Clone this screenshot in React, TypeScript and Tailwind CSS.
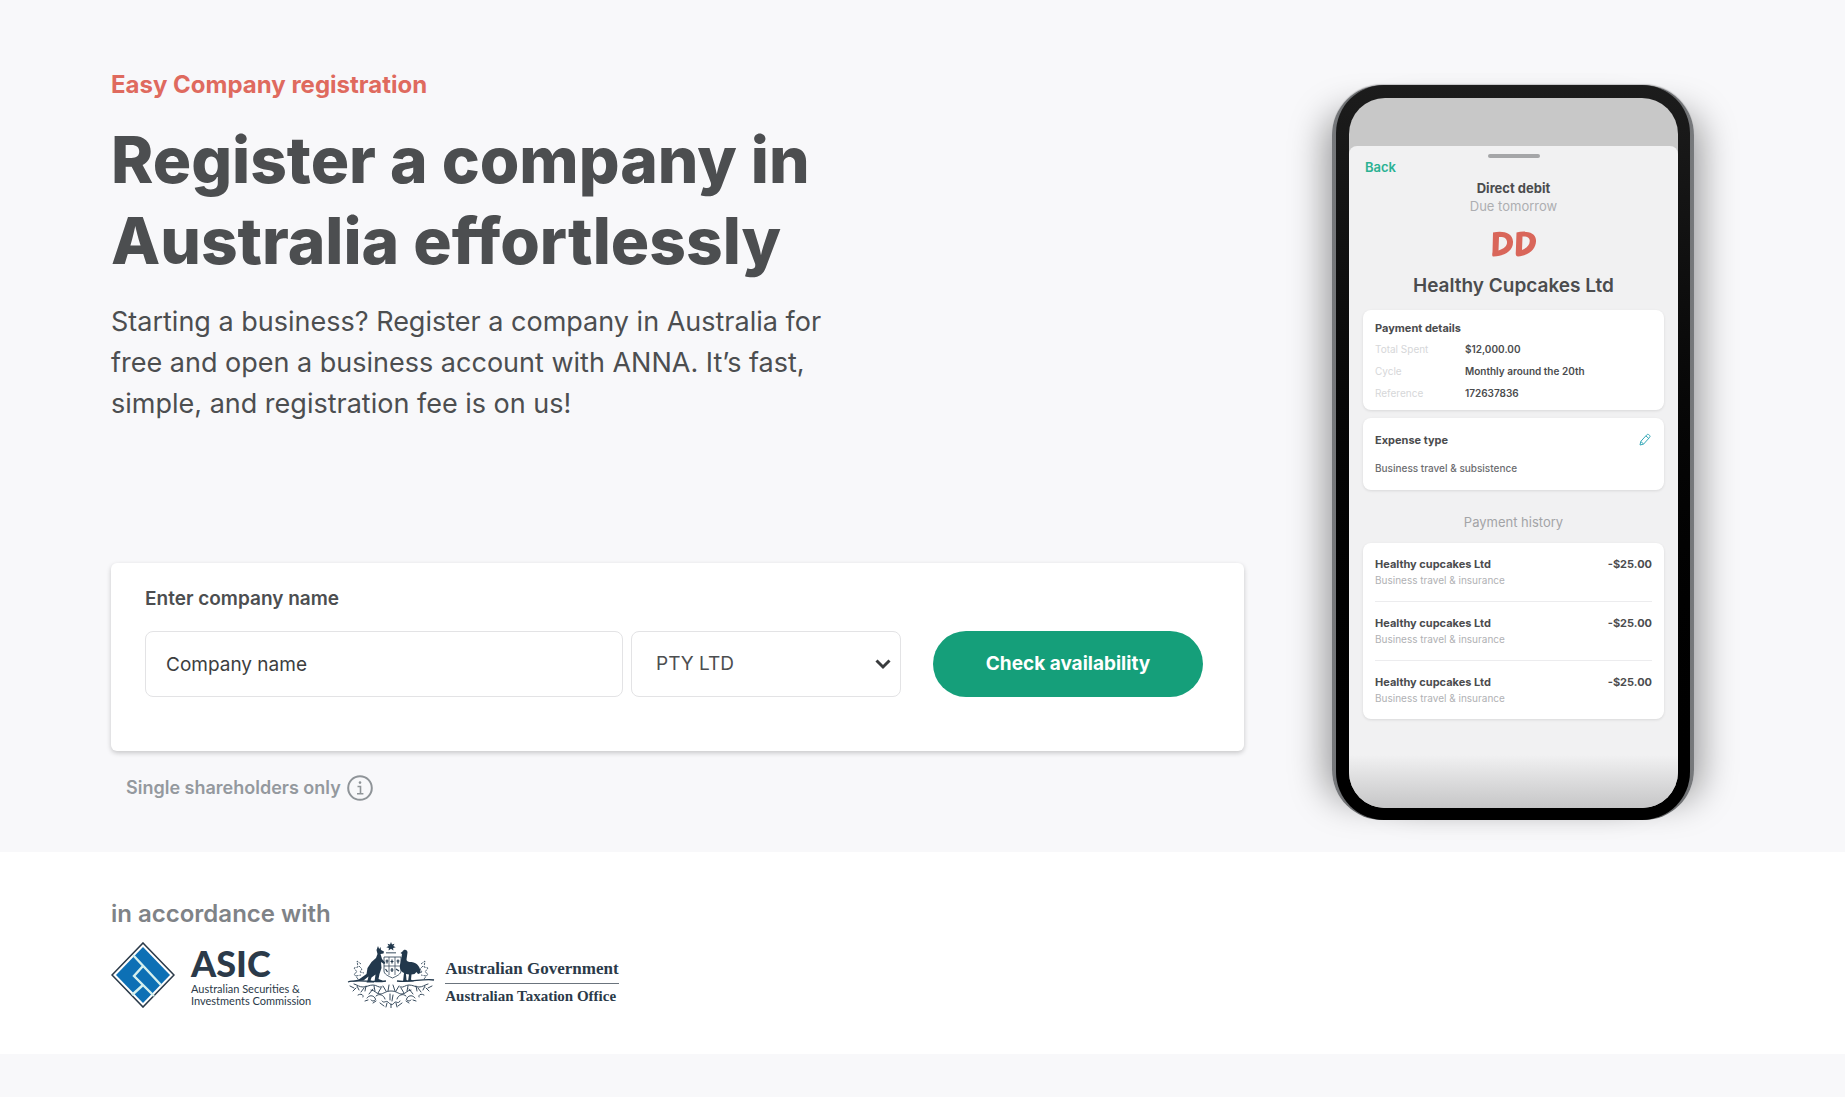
import { useState } from 'react'
import type { ReactNode } from 'react'

const details = [
  { label: 'Total Spent', value: '$12,000.00' },
  { label: 'Cycle', value: 'Monthly around the 20th' },
  { label: 'Reference', value: '172637836' },
]

const payments = [
  { id: 1, name: 'Healthy cupcakes Ltd', category: 'Business travel & insurance', amount: '-$25.00' },
  { id: 2, name: 'Healthy cupcakes Ltd', category: 'Business travel & insurance', amount: '-$25.00' },
  { id: 3, name: 'Healthy cupcakes Ltd', category: 'Business travel & insurance', amount: '-$25.00' },
]

function InfoIcon() {
  return (
    <svg width="26" height="26" viewBox="0 0 26 26" fill="none" stroke="#8f9498" strokeWidth="2">
      <circle cx="13" cy="13" r="11.8" />
      <path d="M10.5 11.5h3v7M10 18.8h6.4" strokeWidth="1.6" />
      <circle cx="13" cy="7.6" r="1.3" fill="#8f9498" stroke="none" />
    </svg>
  )
}

function PencilIcon() {
  return (
    <svg width="14" height="14" viewBox="0 0 14 14" fill="none" stroke="#35a9b8" strokeLinejoin="round">
      <path d="M2 12l.8-3.6 6-6.6c.6-.6 1.5-.6 2.1 0l.7.6c.6.6.6 1.4 0 2l-6 6.7z" />
      <path d="M8 3l3 2.700M2.900 8.600l2.600 2.300" />
    </svg>
  )
}

function AsicMark() {
  return (
    <svg width="64" height="66" viewBox="0 0 64 66">
      <path d="M32 1L63 33 32 65 1 33z" fill="#fff" stroke="#2b3a49" strokeWidth="1.6" />
      <path d="M32 5L59 33 32 61 5 33z" fill="#0d70b5" />
      <path d="M22 13L50 43M32 24L23 34 43 54M32 43L21 53" fill="none" stroke="#d5f0ee" strokeWidth="2.400" />
    </svg>
  )
}

function CoatOfArms() {
  return (
    <svg width="88" height="66" viewBox="0 0 88 66" fill="#22384c">
      <path d="M44 0l1 2.600 2.500-.9-1.200 2.400 2.400 1.200-2.600.6.3 2.700L44 6.800l-2.400 1.800.3-2.700-2.600-.6 2.400-1.200-1.200-2.400 2.500.9z" />
      <path d="M39 10h10v1.500H39z" opacity=".6" />
      {/* Kangaroo */}
      <path d="M31 4l1.200 3 1.300-2 .5 3 3 1.500-.5 2-3 .5 1.500 5 3.500 4-1.500 1-3-2 .5 6-2 6-1 5 4 1.500v1h-8l1-7-4 3-1 3 3.500 1v1h-7.500l1-2 1-4-5 4-13 1.500 9-3 7-5 1-6 4-6 4.500-4 1.500-4-1-4z" />
      {/* Emu */}
      <path d="M55.500 9.500c1-2.500 5-2.500 5 1l-1 7c0 2 2 2.500 5 2.500 6 1 9 5 9 11l-2.500 1-1.500-2-2 2-3 .5-.5 5 3 2h-6l1-7-3-.5.5 6 3 1.500h-6.500l1-8.500c-4-2-5-6-3.500-10l1.500-9-1.500-1z" />
      <g fill="none" stroke="#22384c">
        <path d="M37 15h17v14c0 3-4 5-8.500 7-4.500-2-8.500-4-8.500-7z" strokeWidth=".8" />
        <path d="M42 15v18M48 15v18M37 24h17" strokeWidth=".7" />
        <path d="M38.500 19h3M40 17.500v4M43.500 19.500h3M45 17.500v4M49.500 19h3M51 17.500v4M38.500 27l2 3M43.500 28h3M45 26v4M49 27l3 2" strokeWidth="1.200" />
        <path d="M1 40c9-3 24 1 38-1M50 39c12 2 27-3 37-1" strokeWidth="1.300" />
        {/* Wattle sprays behind the animals */}
        <path
          d="M11 37l-4-5 3-2-3-4 4-1-1-6 4 3M12 24l3 3-2 3 4 1M9 34l5-1M77 37l4-5-3-2 3-4-4-1 1-6-4 3M76 24l-3 3 2 3-4 1M79 34l-5-1"
          strokeWidth=".8"
          strokeDasharray="2.500 1"
        />
        {/* Foliage and ribbon */}
        <g strokeWidth=".9" strokeLinecap="round">
          <path d="M3 44l4 2M6 49l3-3M10 44l2 4M14 50l3-4M19 44l-1 5M22 52l4-5M27 44l1 5M31 51l3-5M36 44l3 5M42 43l-1 6M46 43l2 6M52 44l-3 5M57 51l-3-5M61 44l-1 5M66 52l-4-5M69 44l1 5M74 50l-3-4M78 44l-2 4M82 49l-3-3M85 44l-4 2" />
          <path d="M11 53c3-2 6 0 5 2M20 56c2-3 6-3 8 0s-3 4-4 2M29 54c3-3 8-1 9 3M77 53c-3-2-6 0-5 2M68 56c-2-3-6-3-8 0s3 4 4 2M59 54c-3-3-8-1-9 3" />
          <path d="M24 48c4 0 5 4 9 4s5-3 11-3 7 3 11 3 5-4 9-4M35 59c2 3 4-1 6 1s4 4 6 1 4 2 6-2M33 61l4 3M55 61l-4 3M43 52v6M46 53l-1 6M44 62v4M40 61l-1 4M49 61l1 4" />
          <path d="M7 42c4 1 5 3 9 3s6-2 10-2 5 3 9 2M81 42c-4 1-5 3-9 3s-6-2-10-2-5 3-9 2M18 59l3-1M69 59l-3-1M26 61l3-2M62 61l-3-2" />
        </g>
      </g>
    </svg>
  )
}

function DirectDebitMark() {
  return (
    <svg width="46" height="28" viewBox="0 0 46 28" fill="#d9665a" fillRule="evenodd">
      <path d="M2 2.500C11 .5 21.500 2 22 11.500 22.500 20.500 14 26 2.500 26.500 1 26.500 1 25 1.500 22zM8 7L7.500 20.500C13 19 16.500 16 16 11.500 15.500 7.500 12 6.500 8 7z" />
      <path d="M25.500 2.500C34 .5 44.500 1.500 45 10 45.500 19 38 25.500 27 26.500 25 26.500 24.500 25 24.800 22zM31.500 6.500L31 20C36 18 39 15 38.700 10.500 38.500 7 35 6 31.500 6.500z" />
    </svg>
  )
}

function PhoneCard({ children, className = '' }: { children: ReactNode; className?: string }) {
  return <div className={`rounded-lg bg-white px-3 shadow-[0_1px_3px_rgba(0,0,0,0.1)] ${className}`}>{children}</div>
}

function Phone() {
  return (
    <div className="w-[362px] shrink-0 rounded-[50px] bg-linear-to-r from-[#77797c] via-[#1a1a1a] to-[#77797c] px-1 shadow-[0_-1px_1px_#c4c4c6,30px_4px_36px_-24px_rgba(0,0,0,0.4),-30px_4px_36px_-24px_rgba(0,0,0,0.4)]">
      <div className="rounded-[48px] bg-linear-to-b from-[#1c1c1c] to-black pt-[13px] pr-3 pb-3 pl-[13px]">
        <div className="flex h-[710px] flex-col overflow-hidden rounded-[36px] bg-[#c8c8c8] pt-12">
          <div className="flex flex-1 flex-col rounded-t-lg bg-[#f1f1f2] bg-linear-to-b from-[#f1f1f2] from-92% to-[#c6c6c7] px-3.5">
            <div className="mx-auto mt-2 h-1 w-[52px] rounded-full bg-[#a5a6a8]" />
            <a href="#back" className="self-start pl-0.5 text-[13px] leading-[18px] font-semibold text-[#2bb193]">
              Back
            </a>
            <div className="mt-0.5 text-center">
              <h3 className="text-[13px] leading-5 font-bold text-[#4b4c4e]">Direct debit</h3>
              <p className="text-[13px] leading-4 text-[#adaeb1]">Due tomorrow</p>
              <div className="mt-4 flex justify-center">
                <DirectDebitMark />
              </div>
              <h2 className="mt-3.5 text-[19px] leading-7 font-semibold text-[#4b4c4e]">Healthy Cupcakes Ltd</h2>
            </div>

            {/* Payment details */}
            <PhoneCard className="mt-2.5 pt-2 pb-1.5">
              <h4 className="text-[11px] leading-5 font-bold text-[#4b4c4e]">Payment details</h4>
              <dl>
                {details.map((d) => (
                  <div key={d.label} className="flex text-[10px] leading-[22px]">
                    <dt className="w-[90px] text-[#d6d7d9]">{d.label}</dt>
                    <dd className="font-semibold text-[#4b4c4e]">{d.value}</dd>
                  </div>
                ))}
              </dl>
            </PhoneCard>

            {/* Expense type */}
            <PhoneCard className="mt-2 pt-3 pb-3">
              <div className="flex items-center justify-between">
                <h4 className="text-[11px] leading-5 font-bold text-[#4b4c4e]">Expense type</h4>
                <button aria-label="Edit expense type">
                  <PencilIcon />
                </button>
              </div>
              <p className="mt-2 text-[10px] leading-5 font-medium text-[#6b6c6f]">Business travel &amp; subsistence</p>
            </PhoneCard>

            <h4 className="pt-[22px] pb-[11px] text-center text-[13px] leading-5 text-[#a3a4a7]">Payment history</h4>

            <PhoneCard>
              <ul className="divide-y divide-[#ececee]">
                {payments.map((p) => (
                  <li key={p.id} className="flex items-start justify-between pt-3 pb-3.5">
                    <div>
                      <p className="text-[11px] leading-[18px] font-bold text-[#4b4c4e]">{p.name}</p>
                      <p className="text-[10px] leading-[14px] text-[#b0b1b4]">{p.category}</p>
                    </div>
                    <span className="text-[11px] leading-[18px] font-bold text-[#4b4c4e]">{p.amount}</span>
                  </li>
                ))}
              </ul>
            </PhoneCard>
          </div>
        </div>
      </div>
    </div>
  )
}

export default function App() {
  const [name, setName] = useState('')
  const [type, setType] = useState('PTY LTD')

  return (
    <div className="min-h-screen bg-[#f8f8fa] font-['Inter',sans-serif] text-[#4c4e50]">
      {/* Hero */}
      <section className="flex justify-between gap-[88px] pt-[69px] pr-[151px] pb-8 pl-[111px]">
        <div className="flex-1">
          <p className="text-2xl leading-8 font-bold text-[#df6a5e]">Easy Company registration</p>
          <h1 className="mt-[18px] max-w-[740px] text-[64px] leading-[81px] font-extrabold">
            Register a company in Australia effortlessly
          </h1>
          <p className="mt-5 max-w-[740px] text-[27px] leading-[41px]">
            Starting a business? Register a company in Australia for free and open a business account with ANNA. It’s
            fast, simple, and registration fee is on us!
          </p>

          <form
            className="mt-[139px] rounded-md bg-white pt-6 pr-[41px] pb-[54px] pl-[34px] shadow-[0_2px_5px_rgba(0,0,0,0.2)]"
            onSubmit={(e) => e.preventDefault()}
          >
            <label htmlFor="company" className="block text-[19px] leading-6 font-semibold">
              Enter company name
            </label>
            <div className="mt-5 flex">
              <input
                id="company"
                value={name}
                onChange={(e) => setName(e.target.value)}
                placeholder="Company name"
                className="h-[66px] min-w-0 flex-1 rounded-lg border border-[#e3e3e5] px-5 text-[19px] placeholder:text-[#3c3e40]"
              />
              <div className="relative ml-2 w-[270px]">
                <select
                  aria-label="Company type"
                  value={type}
                  onChange={(e) => setType(e.target.value)}
                  className="h-[66px] w-full appearance-none rounded-lg border border-[#e3e3e5] bg-white px-6 text-[19px]"
                >
                  <option>PTY LTD</option>
                </select>
                <svg
                  className="pointer-events-none absolute top-[26px] right-2.5"
                  width="16"
                  height="14"
                  viewBox="0 0 16 14"
                  fill="none"
                  stroke="#3a3c3e"
                  strokeWidth="3"
                >
                  <path d="M1.500 3.500L8 10l6.500-6.500" />
                </svg>
              </div>
              <button className="ml-8 h-[66px] w-[270px] rounded-full bg-[#159f7a] text-[19px] font-bold text-white">
                Check availability
              </button>
            </div>
          </form>

          <div className="mt-6 flex items-center gap-1.5 pl-[15px] text-lg leading-[26px] font-semibold text-[#94999e]">
            Single shareholders only
            <InfoIcon />
          </div>
        </div>

        <div className="pt-4">
          <Phone />
        </div>
      </section>

      {/* Accreditation */}
      <section className="bg-white px-[111px] pt-[46px] pb-[46px]">
        <p className="text-2xl leading-8 font-semibold text-[#7f8387]">in accordance with</p>
        <div className="mt-3 flex items-center">
          <AsicMark />
          <div className="ml-4 text-[#2b3a49]">
            <p className="font-['Lato',sans-serif] text-4xl leading-10 font-black">ASIC</p>
            <p className="font-['Lato',sans-serif] text-[11px] leading-3">
              Australian Securities &amp;
              <br />
              Investments Commission
            </p>
          </div>
          <div className="ml-9">
            <CoatOfArms />
          </div>
          <div className="ml-2.5 self-end font-['Liberation_Serif',serif] font-bold text-[#2b3a49]">
            <p className="border-b border-[#6b747d] text-[17px] leading-7">Australian Government</p>
            <p className="text-[15px] leading-6">Australian Taxation Office</p>
          </div>
        </div>
      </section>
    </div>
  )
}
